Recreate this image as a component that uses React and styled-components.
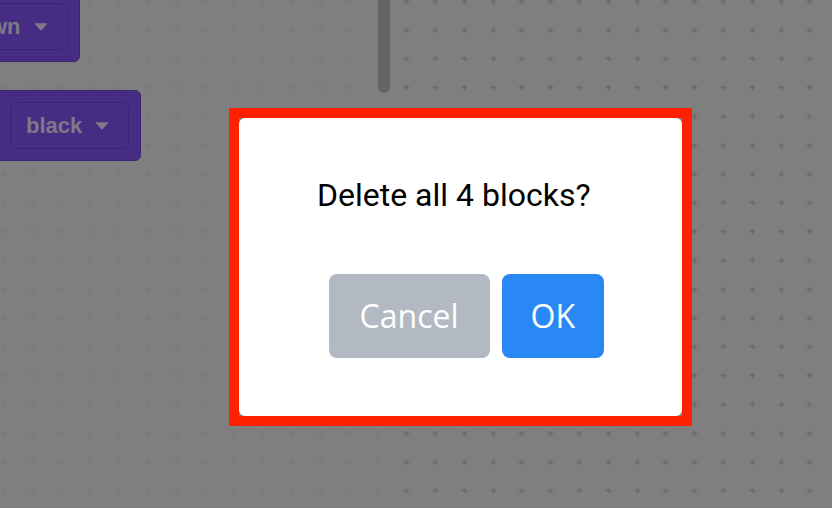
import React from "react";
import styled, { createGlobalStyle } from "styled-components";

const GlobalStyle = createGlobalStyle`
  html, body {
    margin: 0;
    padding: 0;
    width: 832px;
    height: 508px;
    overflow: hidden;
    background: #7f7f7f;
  }
  * { box-sizing: border-box; }
`;

const gridSvg =
  "data:image/svg+xml;utf8," +
  encodeURIComponent(
    "<svg xmlns='http://www.w3.org/2000/svg' width='28.8' height='28.8'><path d='M11.6 14.4h5.6M14.4 11.6v5.6' stroke='#6a6a6a' stroke-width='1.5'/></svg>"
  );

const Stage = styled.div`
  position: relative;
  width: 832px;
  height: 508px;
  overflow: hidden;
  display: flex;
  background-color: #7f7f7f;
  background-image: url("${gridSvg}");
  background-size: 28.8px 28.8px;
  background-position: -10.9px -13.1px;
`;

const Flyout = styled.div`
  width: 390px;
  height: 100%;
  display: flex;
  background: rgba(127, 127, 127, 0.72);
  overflow: hidden;
`;

const BlockList = styled.div`
  flex: 1;
  display: flex;
  flex-direction: column;
  align-items: flex-start;
  gap: 28px;
  margin-top: -9px;
`;

const Block = styled.div`
  display: flex;
  align-items: center;
  height: 71px;
  margin-left: ${(p) => p.$shift}px;
  padding: 0 11px 0 ${(p) => p.$padLeft}px;
  background: #472c84;
  border: 1px solid #3b2470;
  border-radius: 0 6px 6px 0;
`;

const Dropdown = styled.div`
  display: flex;
  align-items: center;
  gap: ${(p) => p.$gap}px;
  height: 47px;
  padding: 0 19px 0 15px;
  background: #472c84;
  border: 1.5px solid #3a2470;
  border-radius: 7px;
  font-family: "Liberation Sans", Arial, sans-serif;
  font-weight: 700;
  font-size: 22px;
  color: #7d7a86;
`;

const Caret = styled.svg`
  width: 14px;
  height: 9px;
  display: block;
`;

const ScrollTrack = styled.div`
  width: 12px;
  display: flex;
  flex-direction: column;
`;

const ScrollThumb = styled.div`
  height: 93px;
  background: #646464;
  border-radius: 0 0 6px 6px;
`;

const Overlay = styled.div`
  position: absolute;
  inset: 0;
  display: flex;
  align-items: flex-start;
  padding: 108px 0 0 229px;
`;

const Frame = styled.div`
  border: 10px solid #ff2000;
`;

const Dialog = styled.div`
  width: 443px;
  height: 298px;
  background: #ffffff;
  border-radius: 6px;
  padding: 58px 78px;
  display: flex;
  flex-direction: column;
`;

const Title = styled.div`
  font-family: Roboto, "Noto Sans", sans-serif;
  font-size: 32px;
  color: #000000;
  white-space: nowrap;
`;

const Buttons = styled.div`
  display: flex;
  justify-content: flex-end;
  gap: 12px;
  margin-top: 60px;
`;

const Button = styled.button`
  height: 84px;
  padding: 0 ${(p) => p.$pad}px;
  border: none;
  border-radius: 8px;
  background: ${(p) => (p.$primary ? "#2a88f5" : "#b2b9c2")};
  color: #ffffff;
  font-family: "Open Sans", "Noto Sans", sans-serif;
  font-size: 32px;
  line-height: 1;
  cursor: pointer;
`;

function DownCaret() {
  return (
    <Caret viewBox="0 0 14 9">
      <path
        d="M1.5 1.2 H12.5 Q13.6 1.2 12.9 2.2 L7.9 7.9 Q7 8.8 6.1 7.9 L1.1 2.2 Q0.4 1.2 1.5 1.2 Z"
        fill="#7d7a86"
      />
    </Caret>
  );
}

export default function App() {
  return (
    <>
      <GlobalStyle />
      <Stage>
        <Flyout>
          <BlockList>
            <Block $shift={-65} $padLeft={11}>
              <Dropdown $gap={14}>
                <span>down</span>
                <DownCaret />
              </Dropdown>
            </Block>
            <Block $shift={-20} $padLeft={29}>
              <Dropdown $gap={13}>
                <span>black</span>
                <DownCaret />
              </Dropdown>
            </Block>
          </BlockList>
          <ScrollTrack>
            <ScrollThumb />
          </ScrollTrack>
        </Flyout>
        <Overlay>
          <Frame>
            <Dialog>
              <Title>Delete all 4 blocks?</Title>
              <Buttons>
                <Button $pad={31}>Cancel</Button>
                <Button $primary $pad={29}>OK</Button>
              </Buttons>
            </Dialog>
          </Frame>
        </Overlay>
      </Stage>
    </>
  );
}
